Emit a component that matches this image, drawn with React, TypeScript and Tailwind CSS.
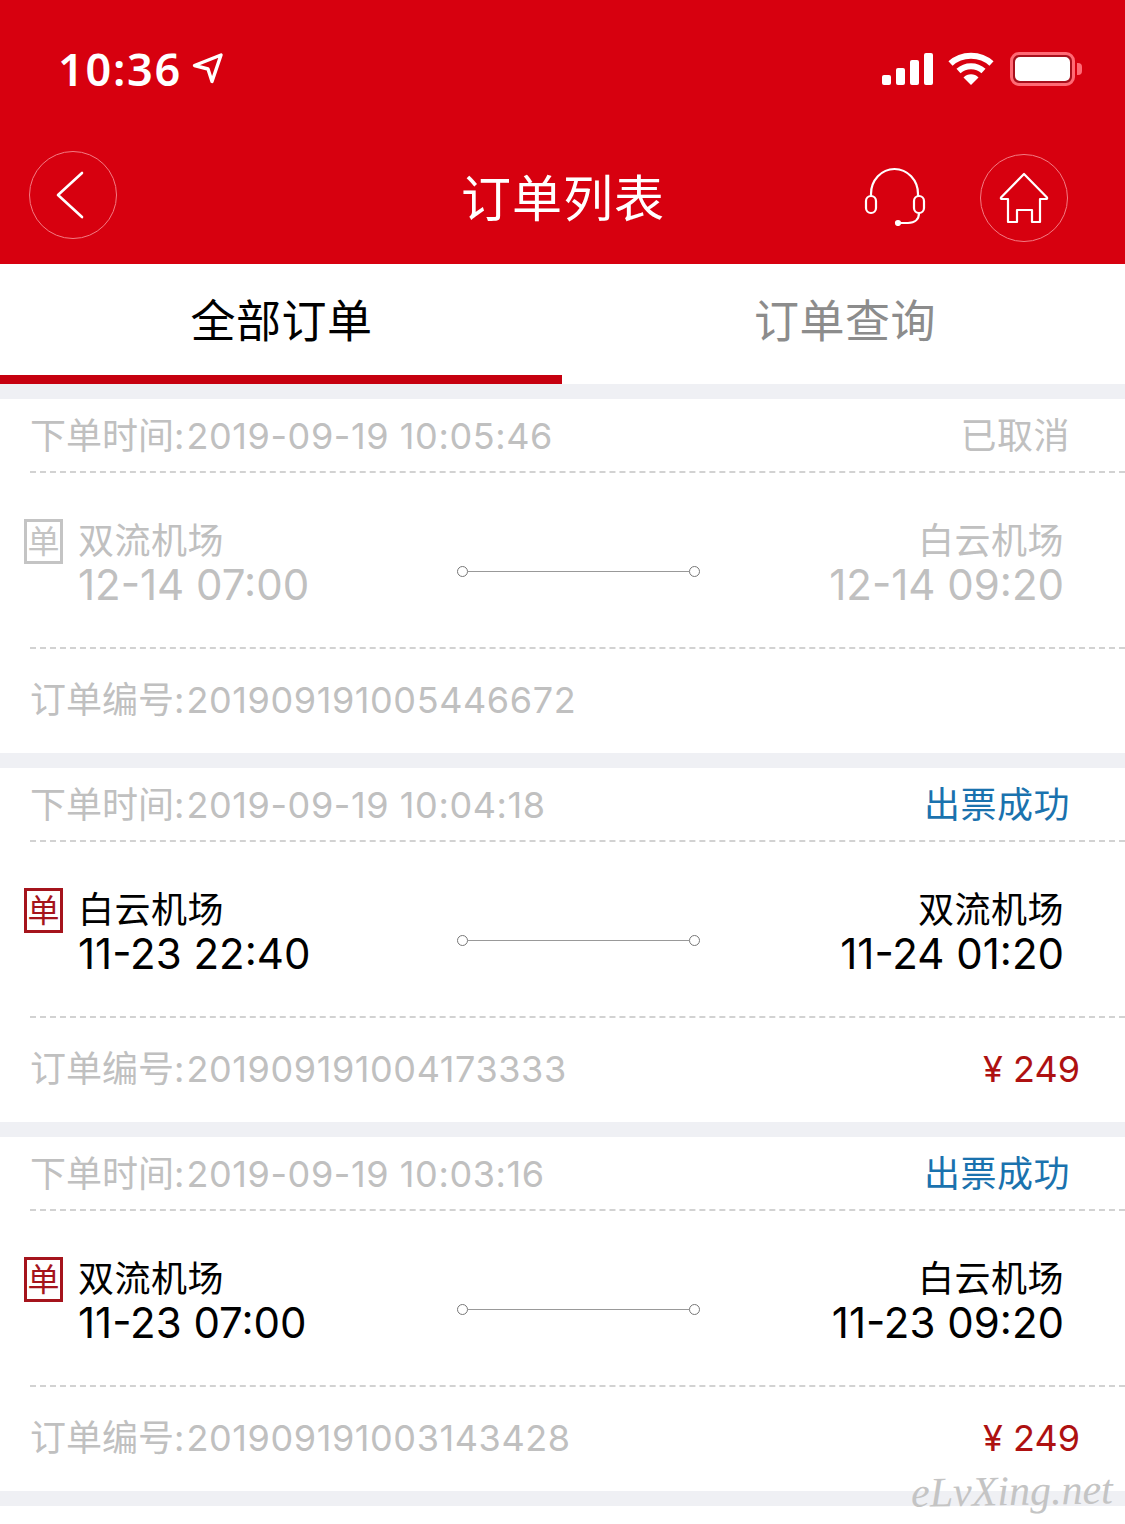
const cjk = "font-['Inter','Noto_Sans_CJK_SC',sans-serif]";

interface Order {
  placed: string;
  status: string;
  from: string;
  depart: string;
  to: string;
  arrive: string;
  orderNo: string;
  price?: string;
}

const orders: Order[] = [
  {
    placed: '2019-09-19 10:05:46',
    status: '已取消',
    from: '双流机场',
    depart: '12-14 07:00',
    to: '白云机场',
    arrive: '12-14 09:20',
    orderNo: '201909191005446672',
  },
  {
    placed: '2019-09-19 10:04:18',
    status: '出票成功',
    from: '白云机场',
    depart: '11-23 22:40',
    to: '双流机场',
    arrive: '11-24 01:20',
    orderNo: '201909191004173333',
    price: '¥ 249',
  },
  {
    placed: '2019-09-19 10:03:16',
    status: '出票成功',
    from: '双流机场',
    depart: '11-23 07:00',
    to: '白云机场',
    arrive: '11-23 09:20',
    orderNo: '201909191003143428',
    price: '¥ 249',
  },
];

const StatusBar = () => (
  <div className="flex h-[135px] items-start justify-between pl-[58px] pr-[43px] pt-[44px]">
    <div className="flex items-center gap-[10px]">
      <span className="text-[45px] leading-[50px] font-semibold tracking-[1.7px] text-white">10:36</span>
      <svg width="32" height="32" viewBox="0 0 32 32" fill="none" className="mt-[-2px]">
        <path d="M2.500 13.500 29 3 20 29.500 16 17Z" stroke="white" strokeWidth="3.400" strokeLinejoin="round" />
      </svg>
    </div>
    <div className="flex items-center gap-[15px] pt-[8px]">
      <div className="flex items-end gap-[5px]">
        <div className="h-[10px] w-[9px] rounded-[2px] bg-white" />
        <div className="h-[17px] w-[9px] rounded-[2px] bg-white" />
        <div className="h-[25px] w-[9px] rounded-[2px] bg-white" />
        <div className="h-[32px] w-[9px] rounded-[2px] bg-white" />
      </div>
      <svg width="46" height="34" viewBox="0 0 46 34" fill="none">
        <path d="M2.500 11.500C13.500 1 32.500 1 43.500 11.500" stroke="white" strokeWidth="6" />
        <path d="M10.500 19C17.500 12.500 28.500 12.500 35.500 19" stroke="white" strokeWidth="6" />
        <path d="M15.500 25.500C19.500 21.300 26.500 21.300 30.500 25.500L23 33Z" fill="white" />
      </svg>
      <div className="ml-[1px] flex items-center">
        <div className="flex h-[34px] w-[65px] items-center rounded-[9px] border-[3px] border-[#ff6a75] bg-[#a80f1c] p-[2px]">
          <div className="h-full w-full rounded-[5px] bg-white" />
        </div>
        <div className="ml-[2px] h-[12px] w-[5px] rounded-r-[4px] bg-[#ff6a75]" />
      </div>
    </div>
  </div>
);

const NavBar = () => (
  <div className="flex h-[129px] items-start justify-between pl-[29px] pr-[57px] pt-[16px]">
    <div className="flex h-[88px] w-[88px] items-center justify-center rounded-full border border-[#f37b83]">
      <svg width="30" height="48" viewBox="0 0 30 48" fill="none" className="mr-[6px]">
        <path d="M27 2 3 24l24 22" stroke="white" strokeWidth="2.600" strokeLinecap="round" strokeLinejoin="round" />
      </svg>
    </div>
    <div className={`${cjk} ml-[344px] pt-[18px] text-[50px] leading-[60px] font-normal tracking-[1px] text-white`}>订单列表</div>
    <div className="ml-auto flex items-start gap-[54px] pt-[3px]">
      <svg width="62" height="60" viewBox="0 0 62 60" fill="none" className="mt-[12px]" stroke="white" strokeWidth="2.200">
        <path d="M7 30v-2a23.500 25 0 0 1 47 0v2" />
        <rect x="2" y="30" width="10" height="17" rx="5" />
        <rect x="50" y="30" width="10" height="17" rx="5" />
        <path d="M55 47c0 6-4 10-11 10H36" strokeLinecap="round" />
        <circle cx="34" cy="57" r="2" fill="white" />
      </svg>
      <div className="flex h-[88px] w-[88px] items-center justify-center rounded-full border border-[#f37b83]">
        <svg width="52" height="52" viewBox="0 0 52 52" fill="none" stroke="white" strokeWidth="2.200" strokeLinejoin="round">
          <path d="M26 2 3 25.500Q2.500 27 4 27h6v23h9V38h15v12h8V27h6q1.500 0 1-1.500Z" />
        </svg>
      </div>
    </div>
  </div>
);

const Tabs = () => (
  <div className={`${cjk} flex h-[120px] bg-white text-[45px] font-normal tracking-[0.5px]`}>
    <div className="flex h-full w-[562px] items-center justify-center border-b-[9px] border-[#c6000f] pl-[1px] pt-[4px] text-black">全部订单</div>
    <div className="flex h-full flex-1 items-center justify-center pb-[5px] pl-[3px] text-[#8c8c8c]">订单查询</div>
  </div>
);

const Dashed = () => <div className="ml-[30px] border-t-2 border-dashed border-[#d2d2d2]" />;

const OrderCard = ({ order }: { order: Order }) => {
  const cancelled = !order.price;
  const main = cancelled ? 'text-[#c0c0c0]' : 'text-black';

  return (
    <div className={`${cjk} mt-[15px] h-[354px] bg-white font-normal`}>
      <div className="flex h-[72px] items-center justify-between pl-[30px] pr-[55px] pt-[2px] text-[36px] leading-[44px] text-[#c0c0c0]">
        <span>
          下单时间:<span className="ml-[2px] tracking-[0.6px]">{order.placed}</span>
        </span>
        <span className={`tracking-[0.5px] ${cancelled ? '' : 'text-[#1a72ae]'}`}>{order.status}</span>
      </div>
      <Dashed />
      <div className="flex h-[174px] items-start pl-[24px] pr-[61px] pt-[46px]">
        <div
          className={`flex h-[45px] w-[39px] shrink-0 items-center justify-center border-[3px] text-[32px] leading-none ${
            cancelled ? 'border-[#c4c4c4] text-[#c4c4c4]' : 'border-[#a5141c] text-[#a5141c]'
          }`}
        >
          单
        </div>
        <div className={`ml-[15px] w-[360px] ${main}`}>
          <div className="text-[36px] leading-[44px] tracking-[0.5px]">{order.from}</div>
          <div className="text-[42px] leading-[44px]">{order.depart}</div>
        </div>
        <div className="ml-[19px] flex w-[243px] items-center pt-[47px]">
          <div className="h-[11px] w-[11px] rounded-full border border-[#777]" />
          <div className="h-px flex-1 bg-[#999]" />
          <div className="h-[11px] w-[11px] rounded-full border border-[#777]" />
        </div>
        <div className={`ml-auto text-right ${main}`}>
          <div className="text-[36px] leading-[44px] tracking-[0.5px]">{order.to}</div>
          <div className="text-[42px] leading-[44px]">{order.arrive}</div>
        </div>
      </div>
      <Dashed />
      <div className="flex h-[104px] items-center justify-between pb-[3px] pl-[30px] pr-[45px] text-[36px] text-[#c0c0c0]">
        <span>
          订单编号:<span className="ml-[2px] tracking-[0.6px]">{order.orderNo}</span>
        </span>
        {order.price && <span className="text-[#ae1111]">{order.price}</span>}
      </div>
    </div>
  );
};

export default function App() {
  return (
    <div className="relative h-[1524px] w-[1125px] overflow-hidden bg-[#eff0f4]">
      <div className="bg-[#d7000f]">
        <StatusBar />
        <NavBar />
      </div>
      <Tabs />
      {orders.map((order) => (
        <OrderCard key={order.orderNo} order={order} />
      ))}
      <div className="mt-[15px] h-[40px] bg-white" />
      <div className="absolute bottom-[12px] right-[12px] -rotate-1 font-['Liberation_Serif',serif] text-[42px] leading-none font-normal italic text-[#c4c4c4]">
        eLvXing.net
      </div>
    </div>
  );
}
